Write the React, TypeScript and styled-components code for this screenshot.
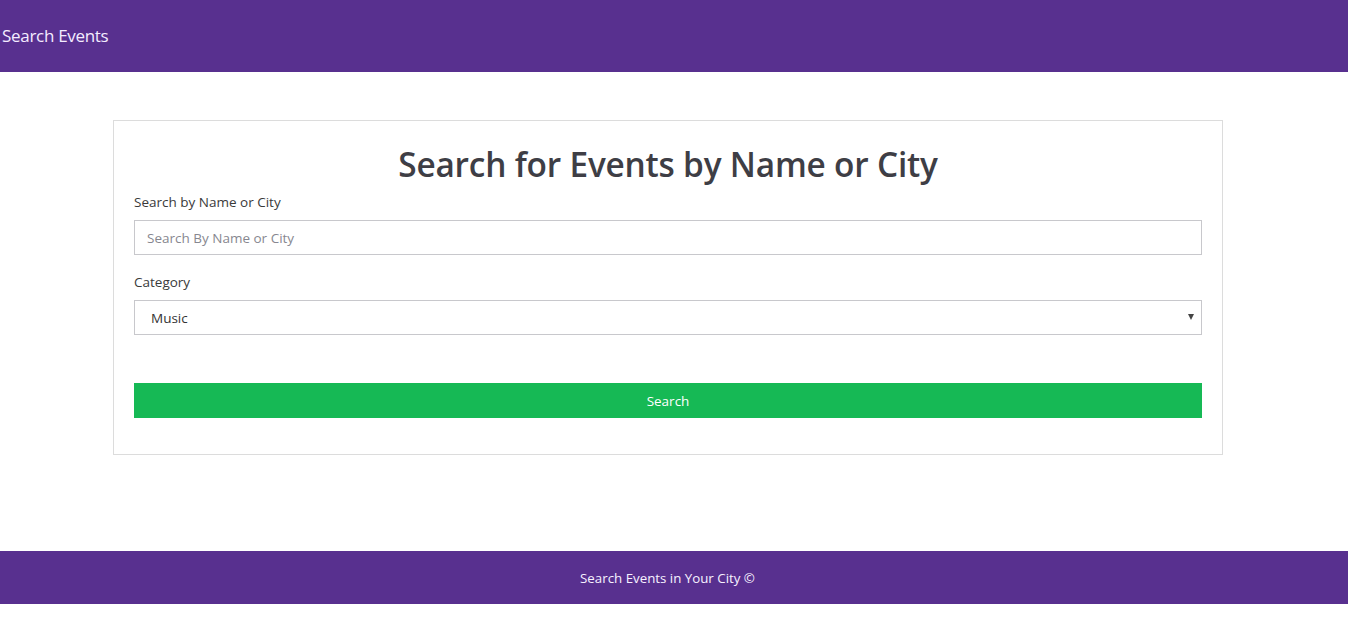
import React from "react";
import styled, { createGlobalStyle } from "styled-components";

const Global = createGlobalStyle`
  html, body { margin: 0; padding: 0; background: #fff; }
  body { font-family: "Open Sans", "Noto Sans", sans-serif; color: #333; }
  * { box-sizing: border-box; }
`;

const Page = styled.div`
  display: flex;
  flex-direction: column;
  min-height: 620px;
`;

const Header = styled.header`
  height: 72px;
  background: #58308f;
  display: flex;
  align-items: center;
  padding-left: 2px;
  padding-bottom: 1px;
`;

const Brand = styled.div`
  color: #f4ecff;
  font-size: 17px;
  letter-spacing: -0.3px;
`;

const Main = styled.main`
  padding: 48px 125px 96px 113px;
`;

const Card = styled.section`
  border: 1px solid #dcdcdc;
  padding: 20px 20px 36px;
  display: flex;
  flex-direction: column;
`;

const Title = styled.h1`
  margin: 3px 0 0;
  text-align: center;
  font-size: 33.4px;
  font-weight: 600;
  color: #3e3e45;
  letter-spacing: -0.2px;
  line-height: 40px;
`;

const Label = styled.label<{ $top: number }>`
  font-size: 13.5px;
  color: #3a3a3a;
  margin-top: ${(p) => p.$top}px;
  line-height: 18px;
`;

const Input = styled.input`
  margin-top: 9px;
  height: 35px;
  border: 1px solid #c8c8cc;
  padding: 0 12px;
  font-family: inherit;
  font-size: 13.5px;
  color: #333;
  outline: none;
  &::placeholder { color: #878790; }
`;

const SelectWrap = styled.div`
  margin-top: 9px;
  position: relative;
`;

const Select = styled.select`
  width: 100%;
  height: 35px;
  border: 1px solid #c8c8cc;
  border-radius: 0;
  background: #fff;
  appearance: none;
  padding: 0 16px;
  font-family: inherit;
  font-size: 13.5px;
  color: #333;
  outline: none;
`;

const Caret = styled.span`
  position: absolute;
  right: 8px;
  top: 14px;
  width: 0;
  height: 0;
  border-left: 3.5px solid transparent;
  border-right: 3.5px solid transparent;
  border-top: 6px solid #444;
  pointer-events: none;
`;

const Button = styled.button`
  margin-top: 48px;
  height: 35px;
  border: none;
  background: #16b955;
  color: #fff;
  font-family: inherit;
  font-size: 13.5px;
`;

const Footer = styled.footer`
  margin-top: auto;
  margin-bottom: 16px;
  height: 53px;
  padding-right: 13px;
  background: #58308f;
  color: #f7f2ff;
  display: flex;
  align-items: center;
  justify-content: center;
  font-size: 13.3px;
`;

export default function App() {
  return (
    <>
      <Global />
      <Page>
        <Header>
          <Brand>Search Events</Brand>
        </Header>
        <Main>
          <Card>
            <Title>Search for Events by Name or City</Title>
            <Label $top={9}>Search by Name or City</Label>
            <Input placeholder="Search By Name or City" />
            <Label $top={18}>Category</Label>
            <SelectWrap>
              <Select defaultValue="Music">
                <option>Music</option>
                <option>Sports</option>
                <option>Arts</option>
              </Select>
              <Caret />
            </SelectWrap>
            <Button>Search</Button>
          </Card>
        </Main>
        <Footer>Search Events in Your City ©</Footer>
      </Page>
    </>
  );
}
